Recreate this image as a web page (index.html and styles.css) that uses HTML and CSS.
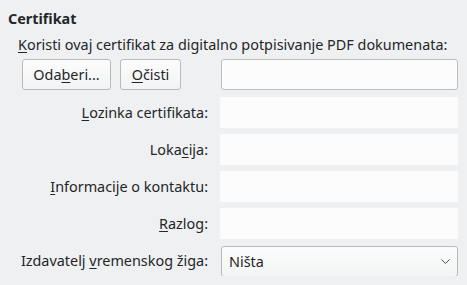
FILE: index.html
```
<!DOCTYPE html>
<html lang="hr">
<head>
  <meta charset="UTF-8" />
  <title>Certifikat</title>
  <link rel="stylesheet" href="styles.css">
</head>
<body>
  <!-- Certificate section -->
  <div class="section">
    <div class="section-title">Certifikat</div>
    <div class="intro"><u>K</u>oristi ovaj certifikat za digitalno potpisivanje PDF dokumenata:</div>

    <div class="form">
      <div class="buttons">
        <button class="btn">Oda<u>b</u>eri...</button>
        <button class="btn"><u>O</u>čisti</button>
      </div>
      <input class="field" type="text">

      <label class="label"><u>L</u>ozinka certifikata:</label>
      <div class="field disabled"></div>

      <label class="label">Loka<u>c</u>ija:</label>
      <div class="field disabled"></div>

      <label class="label"><u>I</u>nformacije o kontaktu:</label>
      <div class="field disabled"></div>

      <label class="label"><u>R</u>azlog:</label>
      <div class="field disabled"></div>

      <label class="label">Izdavatelj <u>v</u>remenskog žiga:</label>
      <div class="combo">
        <span>Ništa</span>
        <svg width="9" height="5" viewBox="0 0 9 5"><path d="M0.5 0.5 L4.5 4.5 L8.5 0.5" fill="none" stroke="#4d4d4d" stroke-width="1"/></svg>
      </div>
    </div>
  </div>
</body>
</html>
```

FILE: styles.css
```
body {
  margin: 0;
  background: #eff0f1;
  font-family: 'Noto Sans', sans-serif;
  font-size: 14.4px;
  color: #232629;
}

.section {
  padding: 8px 9px 0 8px;
}

.section-title {
  font-weight: bold;
  height: 22px;
  line-height: 22px;
}

.intro {
  margin-left: 10px;
  height: 30px;
  line-height: 30px;
}

u {
  text-decoration-thickness: 1px;
  text-underline-offset: 2px;
}

.form {
  display: grid;
  grid-template-columns: 190px 1fr;
  column-gap: 12px;
  row-gap: 6px;
  grid-auto-rows: 31px;
  margin-left: 10px;
}

.buttons {
  display: flex;
  gap: 9px;
  padding-left: 4px;
  margin-top: -1px;
}

.btn {
  font: inherit;
  color: inherit;
  height: 31px;
  padding: 0;
  background: linear-gradient(to bottom, #fcfcfc, #f2f3f3);
  border: 1px solid #b9babb;
  border-radius: 3px;
}

.btn:first-child {
  width: 89px;
}

.btn:last-child {
  width: 61px;
}

.label {
  text-align: right;
  line-height: 31px;
  white-space: nowrap;
}

.field {
  height: 31px;
  box-sizing: border-box;
  background: #fcfcfc;
  margin-left: 1px;
  border: 1px solid #bcbebf;
  border-radius: 3px;
  margin-top: -1px;
}

.field.disabled {
  border: none;
  border-radius: 0;
  margin-left: 0;
  margin-top: 0;
}

.combo {
  display: flex;
  align-items: center;
  justify-content: space-between;
  box-sizing: border-box;
  height: 31px;
  margin-left: 1px;
  padding: 0 7px 0 7px;
  background: linear-gradient(to bottom, #fcfcfc, #f3f4f4);
  border: 1px solid #b9babb;
  border-radius: 3px;
  margin-top: 1px;
}
```
